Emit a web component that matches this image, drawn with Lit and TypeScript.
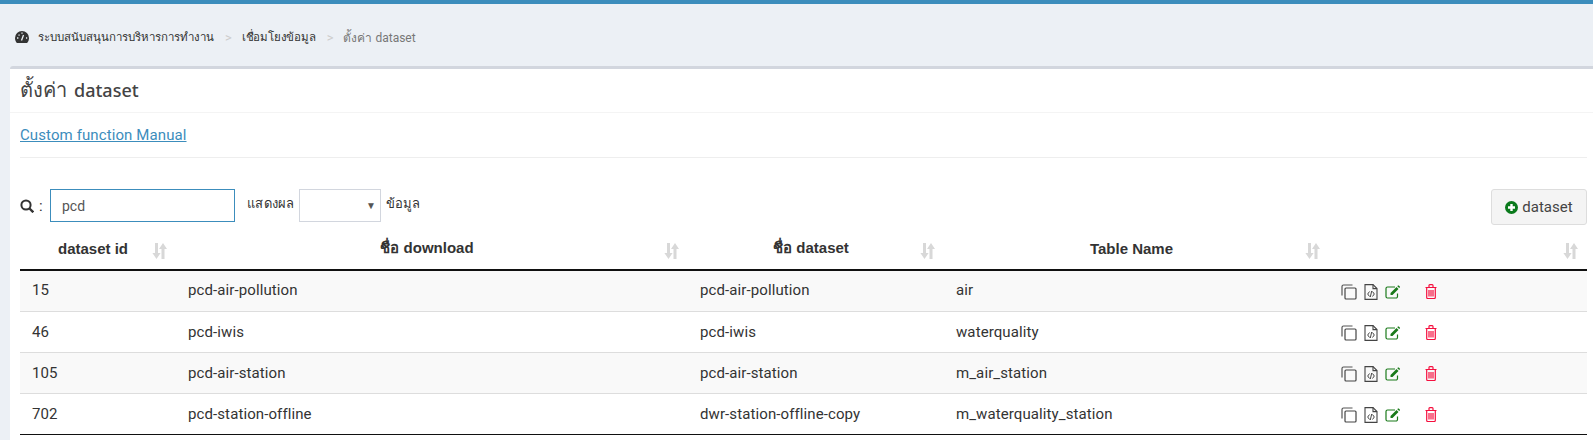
import { css, html, LitElement, svg } from 'lit';
import { customElement } from 'lit/decorators.js';

interface DatasetRow {
  id: string;
  download: string;
  dataset: string;
  table: string;
}

const ROWS: DatasetRow[] = [
  { id: '15', download: 'pcd-air-pollution', dataset: 'pcd-air-pollution', table: 'air' },
  { id: '46', download: 'pcd-iwis', dataset: 'pcd-iwis', table: 'waterquality' },
  { id: '105', download: 'pcd-air-station', dataset: 'pcd-air-station', table: 'm_air_station' },
  { id: '702', download: 'pcd-station-offline', dataset: 'dwr-station-offline-copy', table: 'm_waterquality_station' },
];

const sortIcon = html`<svg class="sort" width="15" height="16" viewBox="0 0 15 16">
  <path fill="#d8d8d8" d="M3 0h3v10h2.600L4.500 16 .4 10H3zM9.500 6h3V16h-3V6zM11 0l4 6H7z" />
</svg>`;

const copyIcon = svg`<svg width="16" height="16" viewBox="0 0 16 16" fill="none" stroke="#444" stroke-width="1.200">
  <path d="M11.500 1H2.500A1.500 1.500 0 0 0 1 2.500V11.500" stroke="#555" />
  <rect x="4" y="4" width="11" height="11" rx="1" />
</svg>`;

const fileIcon = svg`<svg width="14" height="16" viewBox="0 0 14 16" fill="none" stroke="#444" stroke-width="1.100">
  <path d="M1 .6h8l4 4V15.400H1z" />
  <path d="M9 .6v4h4" />
  <path d="M5.500 7.500 3.700 10l1.800 2.500M8.500 7.500l1.800 2.500-1.800 2.500M7.700 7 6.300 13" stroke-width="1" />
</svg>`;

const editIcon = svg`<svg width="16" height="14" viewBox="0 0 16 14" fill="none">
  <path d="M12.500 8.500v3A1.500 1.500 0 0 1 11 13H2.500A1.500 1.500 0 0 1 1 11.500v-8A1.500 1.500 0 0 1 2.500 2H10" stroke="#1a7a1a" stroke-width="1.200" />
  <path fill="#1a7a1a" d="M5.500 8 11.500 2 13.500 4 7.500 10H5.500zM12.300 1.200l.6-.6c.3-.2.6-.2.9 0l1 1c.2.3.2.6 0 .9l-.6.600z" />
</svg>`;

const trashIcon = svg`<svg width="12" height="15" viewBox="0 0 12 15" fill="none" stroke="#f5103f" stroke-width="1.200">
  <path d="M.5 3.500h11M4 3.500V1.600c0-.5.300-.9.800-.9h2.400c.5 0 .8.400.8.900v1.900" />
  <path d="M1.700 3.500v10c0 .6.400 1 1 1h6.600c.6 0 1-.4 1-1v-10" />
  <path d="M4 6v6.500M6 6v6.500M8 6v6.500" />
</svg>`;

@customElement('app-root')
export class AppRoot extends LitElement {
  static override styles = css`
    :host {
      display: block;
      height: 440px;
      overflow: hidden;
      box-sizing: border-box;
      background: #ecf0f5;
      border-top: 4px solid #3c8dbc;
      font-family: Roboto, 'Liberation Sans', 'Noto Sans', sans-serif;
      font-size: 15px;
      color: #333;
    }
    .crumbs {
      display: flex;
      align-items: center;
      box-sizing: border-box;
      height: 62px;
      padding: 4px 0 0 15px;
      font-size: 11.500px;
      color: #333;
    }
    .crumbs .home {
      margin-right: 9px;
    }
    .crumbs .sep {
      color: #ccc;
      font-size: 13px;
      margin: 0 10px 0 11px;
    }
    .crumbs .link {
      letter-spacing: -0.2px;
    }
    .crumbs .current {
      color: #777;
      font-size: 12px;
    }
    .card {
      margin-left: 10px;
      background: #fff;
      border-top: 3px solid #d2d6de;
      border-radius: 3px 0 0 0;
      height: 371px;
    }
    .card-title {
      box-sizing: content-box;
      height: 41px;
      padding: 0 0 2px 10px;
      display: flex;
      align-items: center;
      gap: 7px;
      border-bottom: 1px solid #f4f4f4;
      font-family: 'Noto Sans', Roboto, sans-serif;
      font-size: 18px;
      font-weight: 500;
      color: #444;
    }
    .card-title .th {
      font-size: 20px;
    }
    .body {
      padding: 0 6px 0 10px;
    }
    .manual {
      height: 44px;
      display: flex;
      align-items: center;
      border-bottom: 1px solid #eee;
    }
    .manual a {
      color: #3c8dbc;
      text-decoration: underline;
      letter-spacing: 0.1px;
    }
    .tools {
      display: flex;
      align-items: flex-start;
      margin-top: 31px;
      height: 44px;
    }
    .search-label {
      display: flex;
      align-items: center;
      gap: 5px;
      width: 30px;
      height: 33px;
    }
    .search {
      box-sizing: border-box;
      width: 185px;
      height: 33px;
      padding: 0 11px;
      border: 1px solid #3c8dbc;
      font: inherit;
      font-size: 14px;
      color: #555;
      outline: none;
    }
    .show {
      margin-left: 12px;
      font-size: 13px;
      letter-spacing: 0.3px;
      line-height: 30px;
    }
    .select {
      box-sizing: border-box;
      width: 82px;
      height: 33px;
      margin: 0 5px 0 4px;
      border: 1px solid #d2d6de;
      display: flex;
      align-items: center;
      justify-content: flex-end;
      padding-right: 4px;
      font-size: 10px;
      color: #555;
    }
    .after {
      margin-left: 0;
      letter-spacing: 0;
    }
    .add {
      margin-left: auto;
      box-sizing: border-box;
      width: 96px;
      height: 36px;
      padding: 0;
      display: flex;
      align-items: center;
      justify-content: center;
      gap: 4px;
      font: inherit;
      color: #444;
      background: #f4f4f4;
      border: 1px solid #ddd;
      border-radius: 3px;
    }
    table {
      width: 1567px;
      border-collapse: collapse;
      table-layout: fixed;
    }
    th {
      position: relative;
      height: 37px;
      padding: 0 22px 6px 12px;
      text-align: center;
      font-family: 'Liberation Sans', Roboto, sans-serif;
      font-weight: 700;
      color: #333;
      border-bottom: 2px solid #111;
      box-sizing: border-box;
    }
    .sort {
      position: absolute;
      right: 9px;
      top: 10px;
    }
    td {
      height: 41px;
      box-sizing: border-box;
      padding: 0 12px;
      letter-spacing: 0.1px;
      border-bottom: 1px solid #ddd;
    }
    tbody tr:first-child td {
      padding-bottom: 2px;
    }
    tbody tr:nth-child(odd) td {
      background: #f9f9f9;
    }
    tbody tr:last-child td {
      border-bottom: 1px solid #111;
    }
    .actions {
      display: flex;
      align-items: center;
      gap: 7px;
      padding-top: 2px;
    }
    tbody tr:first-child .actions {
      padding-top: 4px;
    }
    .actions .del {
      display: flex;
      margin-left: 17px;
    }
  `;

  private renderRow(row: DatasetRow) {
    return html`<tr>
      <td>${row.id}</td>
      <td>${row.download}</td>
      <td>${row.dataset}</td>
      <td>${row.table}</td>
      <td>
        <div class="actions">
          ${copyIcon} ${fileIcon} ${editIcon}
          <span class="del">${trashIcon}</span>
        </div>
      </td>
    </tr>`;
  }

  override render() {
    return html`
      <nav class="crumbs">
        <svg class="home" width="14" height="12" viewBox="0 0 14 12">
          <path fill="#333" d="M7 0a7 7 0 0 0-7 7c0 1.900.7 3.600 1.900 5h10.200A7 7 0 0 0 14 7a7 7 0 0 0-7-7z" />
          <path fill="none" stroke="#ecf0f5" stroke-width="1.300" d="M6.500 9.500 8.500 4M2 7h1.400M11 7h1.200M3.600 3.600l.9.900M7 1.500v1.200" />
        </svg>
        <span>ระบบสนับสนุนการบริหารการทำงาน</span>
        <span class="sep">&gt;</span>
        <span class="link">เชื่อมโยงข้อมูล</span>
        <span class="sep">&gt;</span>
        <span class="current">ตั้งค่า dataset</span>
      </nav>
      <section class="card">
        <div class="card-title"><span class="th">ตั้งค่า</span><span>dataset</span></div>
        <div class="body">
          <div class="manual"><a href="#">Custom function Manual</a></div>
          <div class="tools">
            <span class="search-label">
              <svg width="14" height="14" viewBox="0 0 14 14" fill="none" stroke="#333" stroke-width="2">
                <circle cx="6" cy="6" r="4.600" />
                <path d="m9.500 9.500 3.800 3.800" stroke-width="2.400" />
              </svg>
              :
            </span>
            <input class="search" .value=${'pcd'} />
            <span class="show">แสดงผล</span>
            <div class="select">▼</div>
            <span class="show after">ข้อมูล</span>
            <button class="add">
              <svg width="13" height="13" viewBox="0 0 13 13">
                <circle cx="6.500" cy="6.500" r="6.500" fill="#0a7a1c" />
                <path d="M6.500 3v7M3 6.500h7" stroke="#fff" stroke-width="2.400" />
              </svg>
              dataset
            </button>
          </div>
          <table>
            <colgroup>
              <col style="width:156px" />
              <col style="width:512px" />
              <col style="width:256px" />
              <col style="width:385px" />
              <col />
            </colgroup>
            <thead>
              <tr>
                <th>dataset id${sortIcon}</th>
                <th>ชื่อ download${sortIcon}</th>
                <th>ชื่อ dataset${sortIcon}</th>
                <th>Table Name${sortIcon}</th>
                <th>${sortIcon}</th>
              </tr>
            </thead>
            <tbody>
              ${ROWS.map((r) => this.renderRow(r))}
            </tbody>
          </table>
        </div>
      </section>
    `;
  }
}

declare global {
  interface HTMLElementTagNameMap {
    'app-root': AppRoot;
  }
}
